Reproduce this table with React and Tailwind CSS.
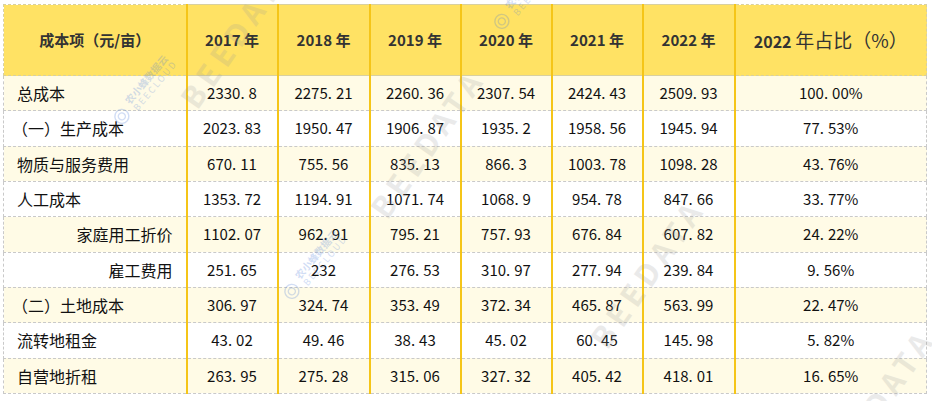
const years = ['2017 年', '2018 年', '2019 年', '2020 年', '2021 年', '2022 年']

const rows = [
  { label: '总成本', align: 'left', values: ['2330.8', '2275.21', '2260.36', '2307.54', '2424.43', '2509.93'], share: '100.00%' },
  { label: '（一）生产成本', align: 'paren', values: ['2023.83', '1950.47', '1906.87', '1935.2', '1958.56', '1945.94'], share: '77.53%' },
  { label: '物质与服务费用', align: 'left', values: ['670.11', '755.56', '835.13', '866.3', '1003.78', '1098.28'], share: '43.76%' },
  { label: '人工成本', align: 'left', values: ['1353.72', '1194.91', '1071.74', '1068.9', '954.78', '847.66'], share: '33.77%' },
  { label: '家庭用工折价', align: 'right', values: ['1102.07', '962.91', '795.21', '757.93', '676.84', '607.82'], share: '24.22%' },
  { label: '雇工费用', align: 'right', values: ['251.65', '232', '276.53', '310.97', '277.94', '239.84'], share: '9.56%' },
  { label: '（二）土地成本', align: 'paren', values: ['306.97', '324.74', '353.49', '372.34', '465.87', '563.99'], share: '22.47%' },
  { label: '流转地租金', align: 'left', values: ['43.02', '49.46', '38.43', '45.02', '60.45', '145.98'], share: '5.82%' },
  { label: '自营地折租', align: 'left', values: ['263.95', '275.28', '315.06', '327.32', '405.42', '418.01'], share: '16.65%' },
]

function Num({ value }) {
  const parts = value.split('.')
  if (parts.length < 2) return <span>{value}</span>
  return (
    <span className="inline-flex">
      <span>{parts[0]}</span>
      <span className="mr-[4px]">.</span>
      <span>{parts[1]}</span>
    </span>
  )
}

function Watermark({ className }) {
  return (
    <div className={`pointer-events-none absolute select-none font-bold tracking-[6px] text-[30px] text-[#9a9a9a] opacity-20 -rotate-[55deg] ${className}`}>
      BEEDATA
    </div>
  )
}

function Cloud({ className }) {
  return (
    <div className={`pointer-events-none absolute select-none flex items-center gap-1 opacity-25 -rotate-[50deg] ${className}`}>
      <svg width="20" height="20" viewBox="0 0 20 20" fill="none" stroke="#4a7bd8" strokeWidth="1.4">
        <circle cx="10" cy="10" r="7" />
        <circle cx="10" cy="10" r="3.5" />
      </svg>
      <div className="flex flex-col leading-[11px] text-[#4a7bd8]">
        <span className="text-[10px] font-bold">农小蜂数据云</span>
        <span className="text-[9px] tracking-[2px]">BEECLOUD</span>
      </div>
    </div>
  )
}

export default function App() {
  return (
    <div className="relative w-[932px] h-[401px] bg-white overflow-hidden pl-[3px] pt-[4px]" style={{ fontFamily: '"Noto Sans CJK SC", "Noto Sans", sans-serif' }}>
      <table className="table-fixed border-collapse w-[923px] text-[#111]">
        <colgroup>
          <col className="w-[183px]" />
          <col className="w-[91px]" />
          <col className="w-[92px]" />
          <col className="w-[91px]" />
          <col className="w-[91px]" />
          <col className="w-[91px]" />
          <col className="w-[92px]" />
          <col className="w-[192px]" />
        </colgroup>
        <thead>
          <tr className="h-[71px] bg-[#ffe264]">
            <th className="border-y border-dashed border-[#d8d0a0] border-l border-l-[#d8d0a0] text-[15px] font-bold text-[#333]" style={{ borderRight: '2px solid #f5c518' }}>
              成本项（元/亩）
            </th>
            {years.map((y) => (
              <th key={y} className="border-x-2 border-[#f5c518] border-y border-y-[#d8d0a0] text-[15px] font-bold text-[#333]">
                {y}
              </th>
            ))}
            <th className="border-y border-y-[#d8d0a0] border-r border-r-[#d8d0a0] border-dashed text-[#333]" style={{ borderLeft: '2px solid #f5c518' }}>
              <span className="text-[16px] font-bold">2022 </span>
              <span className="text-[19px] font-normal">年占比（%）</span>
            </th>
          </tr>
        </thead>
        <tbody>
          {rows.map((r, i) => (
            <tr key={r.label} className={`h-[35.33px] ${i % 2 === 0 ? 'bg-[#fffbe6]' : 'bg-white'}`}>
              <td
                className={`border-y border-dashed border-[#c9c9c9] border-l text-[16px] whitespace-nowrap ${r.align === 'right' ? 'text-right pr-[13px]' : r.align === 'paren' ? 'text-left pl-[8px]' : 'text-left pl-[13px]'}`}
                style={{ borderRight: '2px solid #f5c518' }}
              >
                {r.label}
              </td>
              {r.values.map((v, j) => (
                <td key={j} className="border-y border-dashed border-[#c9c9c9] text-center text-[15px]" style={{ borderLeft: '2px solid #f5c518', borderRight: '2px solid #f5c518' }}>
                  <Num value={v} />
                </td>
              ))}
              <td className="border-y border-r border-dashed border-[#c9c9c9] text-center text-[15px]" style={{ borderLeft: '2px solid #f5c518' }}>
                <Num value={r.share} />
              </td>
            </tr>
          ))}
        </tbody>
      </table>

      <Watermark className="left-[150px] top-[10px]" />
      <Watermark className="left-[340px] top-[120px]" />
      <Watermark className="left-[560px] top-[250px]" />
      <Watermark className="left-[790px] top-[380px]" />
      <Cloud className="left-[100px] top-[80px]" />
      <Cloud className="left-[270px] top-[255px]" />
      <Cloud className="left-[480px] top-[-15px]" />
    </div>
  )
}
